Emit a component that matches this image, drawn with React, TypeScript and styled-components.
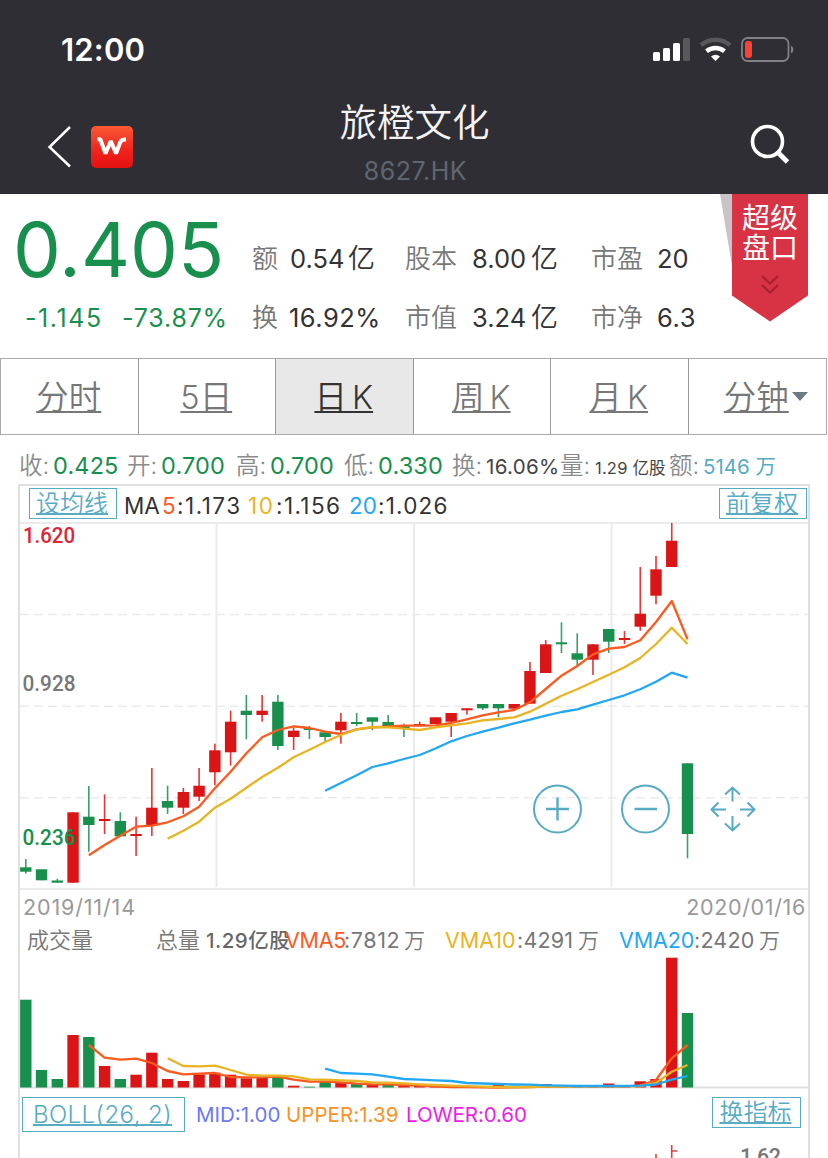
import React from "react";
import styled, { createGlobalStyle } from "styled-components";

const GREEN = "#188f4c";
const RED = "#db1515";
const TEAL = "#57abc2";
const ORANGE = "#fc5a1f";
const GOLD = "#e8b424";
const BLUE = "#22a7f5";

const Global = createGlobalStyle`
  *, *::before, *::after { box-sizing: border-box; }
  html, body { margin: 0; padding: 0; background: #fff; overflow: hidden; }
  body { font-family: Inter, "Noto Sans CJK SC", sans-serif; }
`;

const Page = styled.main`
  position: relative;
  width: 828px;
  height: 1158px;
  overflow: hidden;
  background: #fff;
  display: flex;
  flex-direction: column;
`;

const Header = styled.header`
  flex: none;
  height: 194px;
  background: #2f2e34;
  color: #fff;
`;

const StatusBar = styled.div`
  height: 98px;
  padding: 2px 34px 0 61px;
  display: flex;
  justify-content: space-between;
  align-items: center;
`;

const Clock = styled.span`
  font-size: 31px;
  font-weight: 600;
  line-height: 40px;
  letter-spacing: 0.2px;
`;

const NavBar = styled.div`
  height: 96px;
  display: grid;
  grid-template-columns: 46px 45px 160px 327px 1fr;
`;

const BackIcon = styled.svg`
  grid-column: 2;
  margin-top: 27px;
`;

const Logo = styled.div`
  width: 42px;
  height: 42px;
  margin-top: 28px;
  border-radius: 5px;
  background: linear-gradient(#fb5a35, #f0261d 55%, #e51012);
`;

const TitleBlock = styled.div`
  display: flex;
  flex-direction: column;
  align-items: center;
`;

const Title = styled.h1`
  margin: 0;
  font-size: 37.5px;
  font-weight: 350;
  line-height: 50px;
  height: 55px;
  color: #f4f4f6;
`;

const Code = styled.span`
  font-size: 25px;
  line-height: 36px;
  font-weight: 400;
  color: #5f6670;
  letter-spacing: 0.5px;
  padding-left: 2px;
`;

const SearchIcon = styled.svg`
  margin: 25px 0 0 171px;
`;

const Quote = styled.section`
  flex: none;
  height: 164px;
  display: flex;
`;

const PriceBlock = styled.div`
  width: 252px;
  padding: 17px 0 0 13px;
  color: ${GREEN};
`;

const Price = styled.div`
  font-size: 76px;
  line-height: 76px;
`;

const Row = styled.div<{ $h: number; $x?: number; $pt?: number }>`
  flex: none;
  display: flex;
  align-items: baseline;
  height: ${(p) => p.$h}px;
  padding-left: ${(p) => p.$x ?? 0}px;
  padding-top: ${(p) => p.$pt ?? 0}px;
`;

const Cell = styled.span<{ $w?: number; $s: number; $c: string; $ls?: number; $wt?: number }>`
  flex: none;
  width: ${(p) => (p.$w ? p.$w + "px" : "auto")};
  font-size: ${(p) => p.$s}px;
  color: ${(p) => p.$c};
  letter-spacing: ${(p) => p.$ls ?? 0}px;
  font-weight: ${(p) => p.$wt ?? 400};
  line-height: 30px;
  white-space: nowrap;
`;

const Stats = styled.div`
  padding-top: 50px;
  display: flex;
  flex-direction: column;
  gap: 29px;
`;

const Ribbon = styled.div`
  position: absolute;
  left: 720px;
  top: 194px;
  width: 88px;
  height: 128px;
`;

const RibbonText = styled.div`
  position: absolute;
  left: 22px;
  top: 9px;
  width: 60px;
  font-size: 28px;
  line-height: 30px;
  font-weight: 400;
  color: #fff;
`;

const Tabs = styled.nav`
  flex: none;
  width: 827px;
  height: 77px;
  display: grid;
  grid-template-columns: repeat(6, 1fr);
  border: 1px solid #aaa;
`;

const Tab = styled.a<{ $on?: boolean; $menu?: boolean }>`
  display: flex;
  align-items: center;
  justify-content: center;
  padding: 0 ${(p) => (p.$menu ? 0 : 1)}px 4px ${(p) => (p.$menu ? 17 : 0)}px;
  border-right: 1px solid #999;
  background: ${(p) => (p.$on ? "#e8e8e8" : "#fff")};
  color: ${(p) => (p.$on ? "#333" : "#777")};
  font-size: 32.5px;
  font-weight: 350;
  &:last-child { border-right: 0; }
`;

const TabLabel = styled.span`
  text-decoration: underline;
  text-decoration-thickness: 2px;
  text-underline-offset: 2px;
  text-decoration-skip-ink: none;
  word-spacing: -4px;
`;

const Caret = styled.i`
  border: 8px solid transparent;
  border-top: 9px solid #6c7a82;
  border-bottom: 0;
  margin: 4px 0 0 3px;
`;

const Panel = styled.section`
  flex: none;
  margin-left: 18px;
  width: 792px;
  height: 674px;
  border: 2px solid #e0e0e0;
  border-bottom: 0;
  display: flex;
  flex-direction: column;
`;

const MaBar = styled.div`
  flex: none;
  height: 36px;
  display: flex;
  align-items: flex-start;
  padding-top: 2px;
`;

const Box = styled.a<{ $w: number; $h: number; $s: number; $ml: number; $ls?: number }>`
  flex: none;
  width: ${(p) => p.$w}px;
  height: ${(p) => p.$h}px;
  margin-left: ${(p) => p.$ml}px;
  padding-right: 2px;
  border: 1px solid ${TEAL};
  color: ${TEAL};
  font-size: ${(p) => p.$s}px;
  line-height: ${(p) => p.$h - 2}px;
  letter-spacing: ${(p) => p.$ls ?? 0}px;
  font-weight: 350;
  text-align: center;
  white-space: nowrap;
  text-decoration: underline;
  text-decoration-thickness: 2px;
  text-underline-offset: 1px;
  text-decoration-skip-ink: none;
`;

const Plot = styled.svg`
  flex: none;
  display: block;
  overflow: visible;
`;

const Dates = styled.div`
  flex: none;
  height: 36px;
  display: flex;
  justify-content: space-between;
  padding: 2px 2px 0 3px;
`;

const VolumeBar = styled(Row)`
  margin-top: -1px;
  height: 31px;
`;

const IndicatorBar = styled.div`
  flex: none;
  height: 44px;
  display: flex;
  align-items: flex-start;
  padding-top: 9px;
`;

// [up, bodyTop, bodyBottom, wickTop, wickBottom, volumeTop]
type Bar = [number, number, number, number, number, number];
const bars: Bar[] = [
  [0, 867.3, 871.7, 859, 873.7, 999.7],
  [0, 869.3, 880.3, 869.3, 880.3, 1070],
  [0, 880.5, 882.7, 878.7, 882.7, 1079],
  [1, 812.3, 882.7, 812.3, 882.7, 1035],
  [0, 816.7, 825, 786, 851.7, 1037],
  [1, 819, 821, 794.3, 834, 1066],
  [0, 821, 836.3, 812.3, 836.3, 1079],
  [1, 834, 836, 816.7, 856, 1074.7],
  [1, 807.7, 825.3, 768, 836, 1052.7],
  [0, 801, 807.7, 785.7, 814, 1079],
  [1, 792, 807.7, 788, 814, 1081],
  [1, 785.7, 796.7, 768, 801, 1074.3],
  [1, 750.3, 772.3, 743.7, 785.3, 1072.7],
  [1, 721.7, 752.3, 710.7, 765.7, 1074.7],
  [0, 710.7, 715, 695, 739.3, 1078.3],
  [1, 710.7, 715, 695, 721.7, 1077.7],
  [0, 701.7, 746, 695, 750, 1076.7],
  [1, 730.7, 737, 727.3, 750, 1085.7],
  [0, 728, 730, 726, 739, 1086.7],
  [0, 732.3, 737, 732.3, 741.3, 1080.7],
  [1, 721.7, 730.3, 713, 743.7, 1082.7],
  [0, 722, 724, 713, 726, 1084],
  [0, 717.3, 721.7, 717.3, 730.3, 1085],
  [0, 722, 726.3, 715, 726.3, 1084],
  [0, 726, 728, 723.7, 737, 1085.5],
  [1, 724, 726, 721.7, 726, 1086],
  [1, 717.3, 724, 717.3, 724, 1085.5],
  [1, 713, 721.7, 713, 737, 1086],
  [1, 708.3, 710.3, 708.3, 714.7, 1086],
  [0, 704, 708.3, 704, 710, 1086],
  [0, 704, 708.3, 704, 717.3, 1084],
  [1, 704, 708.7, 704, 708.7, 1086],
  [1, 671, 703.7, 662, 703.7, 1086],
  [1, 644.3, 673, 640, 673, 1084],
  [0, 642.3, 644.3, 622.3, 653, 1086],
  [0, 653.3, 659.7, 633.3, 665, 1086],
  [1, 644.3, 659.7, 644.3, 675, 1086],
  [0, 629, 641.7, 629, 653, 1083.5],
  [1, 638, 640, 631, 644, 1086],
  [1, 613.7, 626.7, 567, 630.7, 1081.3],
  [1, 569.3, 595.7, 556, 604.3, 1079],
  [1, 540.7, 567, 523, 567, 957.7],
  [0, 763.3, 834, 763.3, 858.3, 1013],
];
const volumeRed = [9, 14, 22, 24, 30, 37];

const ma5 = [855.3, 845, 835.7, 826.7, 825.7, 822.3, 816.3, 806.7, 788.3, 771.7, 753.3, 737.3, 730, 726.3, 728, 731.7, 734, 729.3, 727.3, 726.5, 725.7, 725.7, 725.3, 723, 719.3, 715.3, 712.3, 710, 702.3, 689, 675.7, 666, 654.3, 648.7, 647, 640.3, 622, 601, 639.3];
const ma10 = [838.7, 830.7, 821.7, 807.7, 798.7, 787.7, 777, 767.7, 757.3, 749.7, 742, 735, 729.3, 727, 727.3, 728.7, 730, 727.3, 725.3, 723.3, 720.3, 719, 717.3, 711.7, 703.7, 695.7, 689.3, 682, 674.7, 667.3, 658, 644, 627.7, 644];
const ma20 = [790.7, 783, 775.3, 767, 763.3, 759, 755, 748.5, 741.3, 736, 731.7, 727.7, 723.3, 719.7, 715.7, 712, 709.3, 704.7, 700, 695.3, 689.3, 681.7, 672.7, 677.7];
const vma5 = [1045, 1057.7, 1059.7, 1058.7, 1063, 1071, 1074.3, 1073.7, 1073, 1077, 1077.3, 1077.3, 1076.7, 1079.7, 1081.7, 1081.7, 1082.3, 1083.7, 1084.3, 1084.3, 1085, 1085.7, 1086.3, 1087, 1087, 1087.3, 1087.5, 1087.3, 1087, 1086.7, 1086.5, 1086.3, 1086.3, 1086.3, 1086.3, 1085.7, 1080, 1058.3, 1045];
const vma10 = [1058.3, 1066, 1066.3, 1065.7, 1070, 1074.7, 1075.7, 1075.7, 1076.3, 1079.3, 1079.7, 1080.3, 1081, 1082.3, 1082.7, 1083.3, 1084.3, 1085, 1085.7, 1086.2, 1086.6, 1087, 1087, 1087, 1086.7, 1086.5, 1086.3, 1086.3, 1086.3, 1086.3, 1086, 1083, 1071.7, 1065];
const vma20 = [1068.7, 1073, 1073.7, 1074.3, 1076.7, 1079, 1079.7, 1080.3, 1081, 1083, 1083.5, 1084, 1084.5, 1084.7, 1085.3, 1085.7, 1086, 1086, 1086, 1086, 1085.7, 1084.5, 1079.7, 1076];

const cx = (i: number) => 25.8 + 15.755 * i;

const Line = ({ data, color }: { data: number[]; color: string }) => (
  <polyline
    fill="none"
    stroke={color}
    strokeWidth="2.3"
    strokeLinejoin="round"
    points={data.map((y, k) => `${cx(k + 43 - data.length)},${y}`).join(" ")}
  />
);

const Ohlc = ({ label, value, w }: { label: string; value: string; w: number }) => (
  <>
    <Cell $w={34} $s={23.5} $c="#8a8a8a" $wt={350}>{label}:</Cell>
    <Cell $w={w} $s={23.5} $c={GREEN} $ls={0.15}>{value}</Cell>
  </>
);

export default function App() {
  return (
    <Page>
      <Global />
      <Header>
        <StatusBar>
          <Clock>12:00</Clock>
          <svg width="142" height="26" viewBox="0 0 142 26">
            <g fill="#fff">
              <rect x="1" y="15" width="7" height="9" rx="1.6" />
              <rect x="11" y="11" width="7" height="13" rx="1.6" />
              <rect x="21" y="6" width="7" height="18" rx="1.6" />
              <rect x="31" y="1" width="7" height="23" rx="1.6" fill="#59585d" />
            </g>
            <path d="M49 8.2a22 22 0 0 1 29 0" stroke="#59585d" strokeWidth="4.4" fill="none" />
            <path d="M54.5 14.2a14.5 14.5 0 0 1 18 0" stroke="#fff" strokeWidth="4.4" fill="none" />
            <path d="M59 19.6q4.5-3.6 9 0L63.5 24z" fill="#fff" />
            <rect x="90" y="1" width="46.5" height="23" rx="5.5" fill="none" stroke="#828186" strokeWidth="1.8" />
            <rect x="93" y="4" width="7" height="17" rx="2.4" fill="#fb4237" />
            <path d="M139 8.5a4.500 4.500 0 0 1 0 8z" fill="#828186" />
          </svg>
        </StatusBar>
        <NavBar>
          <BackIcon width="28" height="44" viewBox="0 0 28 44">
            <path d="M24 2 3.5 22 24 41.5" stroke="#fff" strokeWidth="2.5" fill="none" />
          </BackIcon>
          <Logo>
            <svg width="42" height="42" viewBox="0 0 42 42">
              <path d="M6.500 13.300h2.800l5.200 14.200 5.300-12.500 5.200 12.500 4.200-11.200q1-3 5.800-2.800" stroke="#fff" strokeWidth="4" fill="none" strokeLinejoin="bevel" />
            </svg>
          </Logo>
          <TitleBlock>
            <Title>旅橙文化</Title>
            <Code>8627.HK</Code>
          </TitleBlock>
          <SearchIcon width="44" height="44" viewBox="0 0 44 44">
            <circle cx="18.5" cy="18.5" r="15" stroke="#fff" strokeWidth="3.6" fill="none" />
            <path d="M28.500 29 38.500 39" stroke="#fff" strokeWidth="5" />
          </SearchIcon>
        </NavBar>
      </Header>

      <Quote>
        <PriceBlock>
          <Price>0.405</Price>
          <Row $h={30} $x={12} $pt={16}>
            <Cell $w={97} $s={25} $c={GREEN} $ls={1.6}>-1.145</Cell>
            <Cell $s={25} $c={GREEN} $ls={0.8}>-73.87%</Cell>
          </Row>
        </PriceBlock>
        <Stats>
          <Row $h={30}>
            <Cell $w={38} $s={26} $c="#777" $wt={350}>额</Cell>
            <Cell $w={58} $s={25.5} $c="#333">0.54</Cell>
            <Cell $w={57} $s={27} $c="#333" $wt={350}>亿</Cell>
            <Cell $w={67} $s={26} $c="#777" $wt={350}>股本</Cell>
            <Cell $w={59} $s={25.5} $c="#333">8.00</Cell>
            <Cell $w={60} $s={27} $c="#333" $wt={350}>亿</Cell>
            <Cell $w={66} $s={26} $c="#777" $wt={350}>市盈</Cell>
            <Cell $s={25.5} $c="#333">20</Cell>
          </Row>
          <Row $h={30}>
            <Cell $w={37} $s={26} $c="#777" $wt={350}>换</Cell>
            <Cell $w={116} $s={25.5} $c="#333" $ls={0.5}>16.92%</Cell>
            <Cell $w={67} $s={26} $c="#777" $wt={350}>市值</Cell>
            <Cell $w={59} $s={25.5} $c="#333">3.24</Cell>
            <Cell $w={60} $s={27} $c="#333" $wt={350}>亿</Cell>
            <Cell $w={66} $s={26} $c="#777" $wt={350}>市净</Cell>
            <Cell $s={25.5} $c="#333" $ls={0.6}>6.3</Cell>
          </Row>
        </Stats>
      </Quote>

      <Ribbon>
        <svg width="88" height="128" viewBox="0 0 88 128">
          <path d="M0 0H12V72z" fill="#c9c2c6" />
          <path d="M12 0H88V101.500L50 127.500 12 101.500z" fill="#d73345" />
          <path d="M42 82l8 7.500 8-7.500M42 91l8 7.500 8-7.500" stroke="#a8202f" strokeWidth="2.200" fill="none" />
        </svg>
        <RibbonText>超级<br />盘口</RibbonText>
      </Ribbon>

      <Tabs>
        <Tab><TabLabel>分时</TabLabel></Tab>
        <Tab><TabLabel>5日</TabLabel></Tab>
        <Tab $on><TabLabel>日 K</TabLabel></Tab>
        <Tab><TabLabel>周 K</TabLabel></Tab>
        <Tab><TabLabel>月 K</TabLabel></Tab>
        <Tab $menu><TabLabel>分钟</TabLabel><Caret /></Tab>
      </Tabs>

      <Row $h={49} $x={19} $pt={16}>
        <Ohlc label="收" value="0.425" w={74} />
        <Ohlc label="开" value="0.700" w={75} />
        <Ohlc label="高" value="0.700" w={74} />
        <Ohlc label="低" value="0.330" w={74} />
        <Cell $w={34} $s={23.5} $c="#8a8a8a" $wt={350}>换:</Cell>
        <Cell $w={74} $s={20.5} $c="#444" $ls={0.3}>16.06%</Cell>
        <Cell $w={35} $s={23.5} $c="#8a8a8a" $wt={350}>量:</Cell>
        <Cell $w={74} $s={16.5} $c="#444" $ls={0.2}>1.29 亿股</Cell>
        <Cell $w={34} $s={23.5} $c="#8a8a8a" $wt={350}>额:</Cell>
        <Cell $s={20.5} $c={TEAL}>5146 万</Cell>
      </Row>

      <Panel>
        <MaBar>
          <Box $w={88} $h={31} $s={24} $ml={9}>设均线</Box>
          <Row $h={30} $x={7} $pt={3}>
            <Cell $w={38} $s={22.5} $c="#333">MA</Cell>
            <Cell $w={15} $s={22.5} $c={ORANGE}>5</Cell>
            <Cell $w={71} $s={22.5} $c="#333" $ls={1.5}>:1.173</Cell>
            <Cell $w={28} $s={22.5} $c={GOLD} $ls={1.5}>10</Cell>
            <Cell $w={73} $s={22.5} $c="#333" $ls={1.4}>:1.156</Cell>
            <Cell $w={29} $s={22.5} $c={BLUE}>20</Cell>
            <Cell $w={341} $s={22.5} $c="#333" $ls={1.2}>:1.026</Cell>
          </Row>
          <Box $w={88} $h={31} $s={24} $ml={0}>前复权</Box>
        </MaBar>

        <Plot width="788" height="368" viewBox="20 522 788 368">
          <g stroke="#ebebeb" strokeWidth="2">
            <path d="M20 523H808M20 889H808" />
            <path d="M216.500 522V887M414 522V887M611.500 522V887" />
            <path d="M20 614.500H808M20 706.200H808M20 797.700H808" strokeDasharray="9 5" strokeWidth="1.600" />
          </g>
          {bars.map(([up, t, b, wt, wb], i) => (
            <g key={i} fill={up ? RED : GREEN}>
              <rect x={cx(i) - 0.8} y={wt} width="1.6" height={wb - wt} opacity="0.85" />
              <rect x={cx(i) - 5.7} y={t} width="11.4" height={b - t} />
            </g>
          ))}
          <Line data={ma20} color={BLUE} />
          <Line data={ma5} color={ORANGE} />
          <Line data={ma10} color={GOLD} />
          <g fontFamily="Roboto" fontWeight="500" fontSize="21.5">
            <text x="23" y="543" fill="#e02434" textLength="52" lengthAdjust="spacingAndGlyphs">1.620</text>
            <text x="22.5" y="691" fill="#777" textLength="53" lengthAdjust="spacingAndGlyphs">0.928</text>
            <text x="22.5" y="845" fill={GREEN} textLength="53" lengthAdjust="spacingAndGlyphs">0.236</text>
          </g>
          <g fill="none" stroke={TEAL} strokeWidth="2">
            <circle cx="557.5" cy="809" r="23.5" />
            <circle cx="645.5" cy="809" r="23.5" />
            <path d="M546 809h23M557.500 797.500v23M634.500 809h22.500" strokeWidth="2.400" />
            <path d="M732.500 801.500V788M725 794.500l7.500-7 7.500 7M732.500 816v14M725 823.500l7.500 7 7.500-7M726 809.500H712M718.500 802.500l-7 7 7 7M740 809.500h14M747.500 802.500l7 7-7 7" />
          </g>
        </Plot>

        <Dates>
          <Cell $s={21.5} $c="#999" $ls={0.85}>2019/11/14</Cell>
          <Cell $s={21.5} $c="#999" $ls={0.65}>2020/01/16</Cell>
        </Dates>

        <VolumeBar $h={31} $x={7}>
          <Cell $w={129} $s={22} $c="#777" $wt={350}>成交量</Cell>
          <Cell $w={50} $s={22} $c="#777" $wt={350}>总量</Cell>
          <Cell $w={79} $s={20.5} $c="#666" $wt={500} $ls={0.5}>1.29亿股</Cell>
          <Cell $w={59} $s={21.5} $c={ORANGE} $ls={-0.3}>VMA5</Cell>
          <Cell $w={60} $s={21.5} $c="#777" $ls={0.6}>:7812</Cell>
          <Cell $w={41} $s={21} $c="#777" $wt={350}>万</Cell>
          <Cell $w={72} $s={21.5} $c={GOLD}>VMA10</Cell>
          <Cell $w={61} $s={21.5} $c="#777" $ls={0.2}>:4291</Cell>
          <Cell $w={41} $s={21} $c="#777" $wt={350}>万</Cell>
          <Cell $w={75} $s={21.5} $c={BLUE} $ls={-0.1}>VMA20</Cell>
          <Cell $w={65} $s={21.5} $c="#777" $ls={0.2}>:2420</Cell>
          <Cell $s={21} $c="#777" $wt={350}>万</Cell>
        </VolumeBar>

        <Plot width="788" height="132" viewBox="20 956 788 132">
          <path d="M20 1087.500H808" stroke="#dfdfdf" strokeWidth="2" />
          {bars.map(([up, , , , , v], i) => (
            <rect key={i} x={cx(i) - 5.7} y={v} width="11.4" height={1087.5 - v} fill={up || volumeRed.includes(i) ? RED : GREEN} />
          ))}
          <Line data={vma5} color={ORANGE} />
          <Line data={vma10} color={GOLD} />
          <Line data={vma20} color={BLUE} />
        </Plot>

        <IndicatorBar>
          <Box $w={163} $h={35} $s={24} $ml={2} $ls={0.45}>BOLL(26, 2)</Box>
          <Row $h={34} $x={11} $pt={3}>
            <Cell $w={90} $s={20.5} $c="#6e78f0">MID:1.00</Cell>
            <Cell $w={120} $s={20.5} $c="#fa9226" $ls={0.05}>UPPER:1.39</Cell>
            <Cell $w={306} $s={20.5} $c="#ec1ee6" $ls={-0.1}>LOWER:0.60</Cell>
          </Row>
          <Box $w={89} $h={31} $s={24} $ml={0}>换指标</Box>
        </IndicatorBar>

        <Plot width="788" height="26" viewBox="20 1132 788 26">
          <path d="M671.700 1145V1158M671.700 1151H677.500M656 1154V1158" stroke="#d8453f" strokeWidth="1.600" />
          <text x="740" y="1164" fontFamily="Roboto" fontWeight="500" fontSize="21.5" fill="#777" textLength="41">1.62</text>
        </Plot>
      </Panel>
    </Page>
  );
}
